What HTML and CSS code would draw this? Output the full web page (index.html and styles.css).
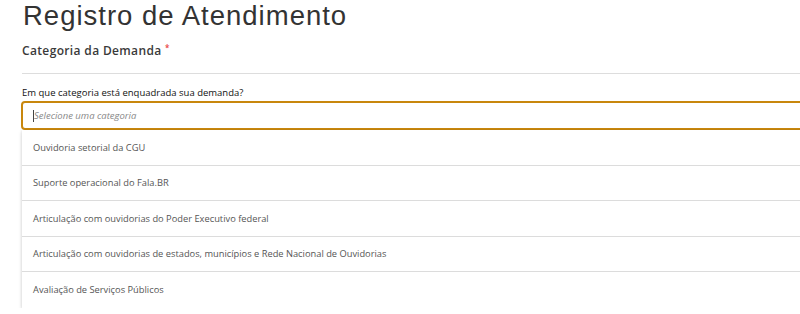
FILE: index.html
```html
<!DOCTYPE html>
<html lang="pt-BR">
<head>
    <meta charset="UTF-8">
    <title>Registro de Atendimento</title>
    <link rel="stylesheet" href="styles.css">
</head>
<body>
    <div id="page">
        <h1 class="page-title">Registro de Atendimento</h1>

        <div class="section">
            <h2 class="section-title">Categoria da Demanda <span class="required">*</span></h2>
        </div>

        <div class="field">
            <label class="field-label">Em que categoria está enquadrada sua demanda?</label>
            <div class="select-box">
                <span class="caret"></span>
                <span class="placeholder">Selecione uma categoria</span>
            </div>
            <ul class="select-list">
                <li class="select-item">Ouvidoria setorial da CGU</li>
                <li class="select-item">Suporte operacional do Fala.BR</li>
                <li class="select-item">Articulação com ouvidorias do Poder Executivo federal</li>
                <li class="select-item">Articulação com ouvidorias de estados, municípios e Rede Nacional de Ouvidorias</li>
                <li class="select-item">Avaliação de Serviços Públicos</li>
            </ul>
        </div>
    </div>
</body>
</html>
```

FILE: styles.css
```css
html, body {
    margin: 0;
    overflow: hidden;
    background-color: #fff;
}
body {
    font-family: 'Open Sans', 'DejaVu Sans', sans-serif;
    color: #333;
}
#page {
    width: 800px;
    padding-left: 22px;
}
.page-title {
    margin: 0;
    font-family: 'Liberation Sans', Arial, sans-serif;
    font-size: 27.5px;
    font-weight: 400;
    letter-spacing: 1px;
    line-height: 31px;
    color: #333;
    padding-left: 1px;
}
.section {
    margin-top: 9px;
    border-bottom: 1px solid #ddd;
    padding-bottom: 14px;
}
.section-title {
    margin: 0;
    font-size: 12px;
    font-weight: 600;
    letter-spacing: 0.35px;
    line-height: 16px;
    color: #3a3a3a;
}
.required {
    color: #e8413c;
    font-size: 8px;
    vertical-align: 4px;
}
.field {
    margin-top: 12px;
}
.field-label {
    display: block;
    font-size: 9.5px;
    line-height: 14px;
    color: #111;
}
.select-box {
    margin-top: 1px;
    margin-left: -1px;
    height: 29px;
    box-sizing: border-box;
    border: 2px solid #c8870d;
    border-radius: 4px;
    display: flex;
    align-items: center;
    padding-left: 10px;
}
.caret {
    width: 1px;
    height: 12px;
    background-color: #444;
}
.placeholder {
    font-size: 9.5px;
    font-style: italic;
    color: #888;
}
.select-list {
    list-style: none;
    margin: 0;
    padding: 0;
    box-shadow: 0 2px 4px rgba(0, 0, 0, 0.15), -1px 0 2px rgba(0, 0, 0, 0.05);
}
.select-item {
    height: 35.5px;
    box-sizing: border-box;
    border-bottom: 1px solid #dcdcdc;
    display: flex;
    align-items: center;
    padding-left: 11px;
    font-size: 9.3px;
    color: #555;
}
.select-item:last-child {
    border-bottom: none;
}
```
